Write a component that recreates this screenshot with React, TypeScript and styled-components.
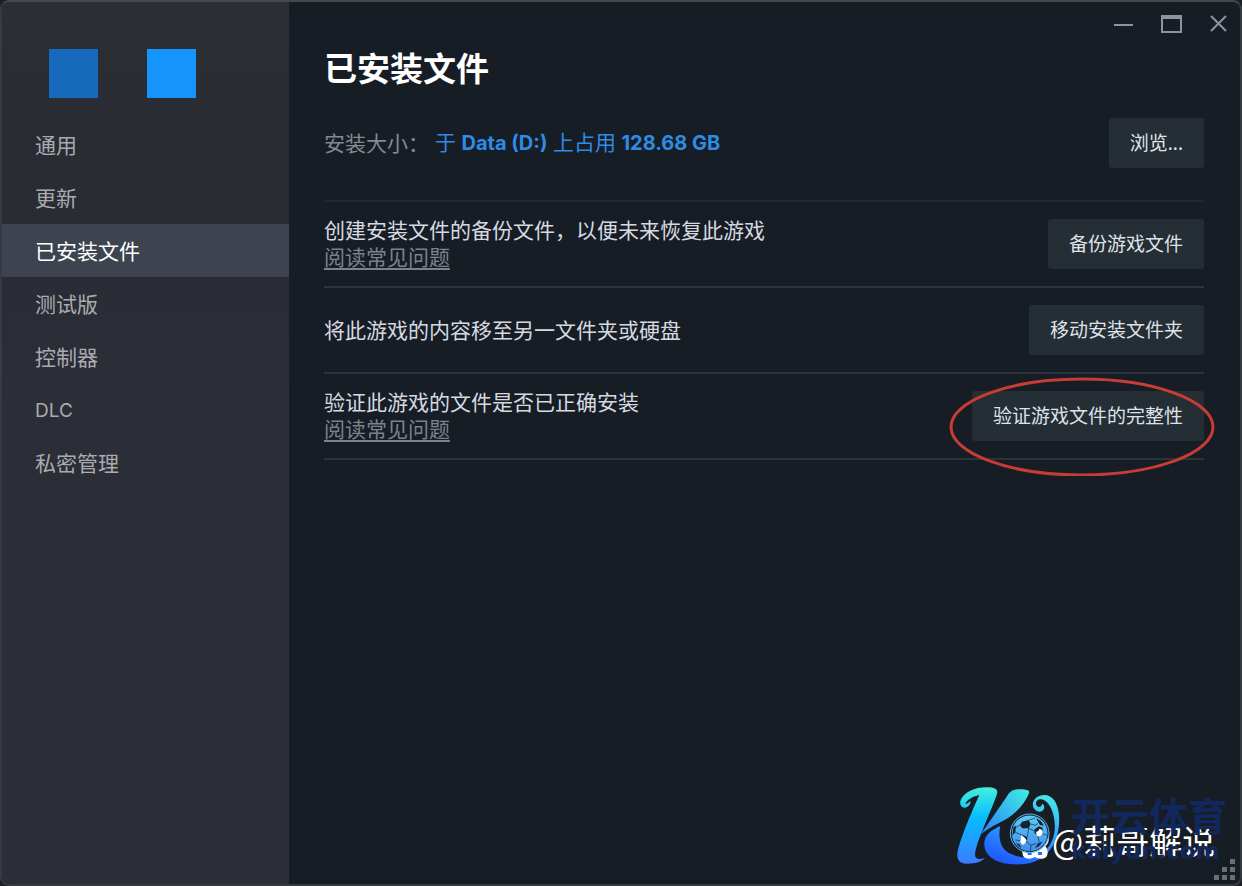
import React from 'react';
import styled, { createGlobalStyle } from 'styled-components';

const GlobalStyle = createGlobalStyle`
  * { box-sizing: border-box; }
  body {
    margin: 0;
    background: #1c1f26;
    font-family: 'Noto Sans', 'Noto Sans CJK SC', sans-serif;
    font-size: 21px;
    line-height: 27px;
    color: #d6dae0;
  }
`;

const Window = styled.div`
  position: relative;
  display: grid;
  grid-template-columns: 287px 1fr;
  min-height: 100vh;
  border: 2px solid #363b42;
  border-top-color: #46484c;
  border-radius: 9px;
  overflow: hidden;
  background: #171d25;
`;

const Sidebar = styled.aside`
  background: linear-gradient(180deg, #2b2e32 0, #2a2c34 140px, #2b2d37 400px, #2c2d38 100%);
`;

const Swatches = styled.div`
  display: flex;
  gap: 49px;
  padding: 47px 47px 20px;
`;

const Swatch = styled.span<{ $color: string }>`
  width: 49px;
  height: 49px;
  background: ${(p) => p.$color};
`;

const NavLink = styled.a<{ $active?: boolean }>`
  display: flex;
  align-items: center;
  height: 53px;
  padding: 2px 33px 0;
  text-decoration: none;
  color: ${(p) => (p.$active ? '#ffffff' : '#a9abae')};
  background: ${(p) => (p.$active ? '#3d4450' : 'transparent')};
`;

const Latin = styled.span`
  font-family: Inter, sans-serif;
  font-size: 19px;
`;

const Main = styled.main`
  padding: 46px 36px 0 35px;
`;

const Title = styled.h1`
  margin: 0;
  font-size: 33px;
  line-height: 42px;
  font-weight: 700;
  color: #ffffff;
`;

const SizeRow = styled.div`
  display: flex;
  align-items: center;
  margin-top: 28px;
  padding-bottom: 32px;
  border-bottom: 2px solid #212830;
`;

const SizeLabel = styled.span`
  color: #858a91;
`;

const SizeValue = styled.span`
  flex: 1;
  margin-left: 6px;
  color: #2e8ce4;
`;

const Strong = styled.strong`
  font-family: Inter, sans-serif;
  font-size: 20px;
  font-weight: 700;
`;

const Row = styled.section`
  display: flex;
  align-items: center;
  justify-content: space-between;
  min-height: 86px;
  border-bottom: 2px solid #2c333c;
`;

const RowText = styled.p`
  margin: 0;
`;

const FaqLink = styled.a`
  display: block;
  width: fit-content;
  color: #7c828a;
  text-decoration: underline;
  text-decoration-thickness: 2px;
  text-underline-offset: 3px;
`;

const Action = styled.button`
  height: 50px;
  padding: 0 21px;
  border: 0;
  border-radius: 3px;
  background: #252d35;
  color: #dfe3e8;
  font: inherit;
  font-size: 19px;
  cursor: pointer;
`;

const Marked = styled.div`
  position: relative;
`;

const Ring = styled.svg`
  position: absolute;
  left: -23px;
  top: -14px;
  width: 266px;
  height: 99px;
  pointer-events: none;
`;

const Controls = styled.div`
  position: absolute;
  top: 10px;
  right: 10px;
  display: flex;
  gap: 23px;
`;

const Control = styled.button`
  display: flex;
  width: 24px;
  height: 24px;
  padding: 0;
  border: 0;
  background: none;
  color: #8c949e;
  cursor: pointer;
`;

const Grip = styled.svg`
  position: absolute;
  right: 5px;
  bottom: 4px;
`;

const Watermark = styled.div`
  position: absolute;
  right: 12px;
  bottom: 14px;
  width: 272px;
  height: 84px;
`;

const Logo = styled.svg`
  position: absolute;
  left: 0;
  top: 0;
`;

const Author = styled.span`
  position: absolute;
  left: 96px;
  top: 34px;
  font-family: 'Noto Sans CJK SC', sans-serif;
  font-size: 33px;
  line-height: 40px;
  white-space: nowrap;
  color: #ffffff;
`;

const Brand = styled.div`
  position: absolute;
  left: 115px;
  top: 5px;
  color: #12285c;
  font-family: 'Noto Sans CJK SC', sans-serif;
  font-size: 39px;
  line-height: 46px;
  font-weight: 700;
  white-space: nowrap;
`;

const Site = styled.div`
  font-family: 'DejaVu Sans', sans-serif;
  font-size: 23px;
  line-height: 28px;
  font-weight: 700;
`;

const nav = ['通用', '更新', '已安装文件', '测试版', '控制器', 'DLC', '私密管理'];

const rows = [
  { text: '创建安装文件的备份文件，以便未来恢复此游戏', faq: true, action: '备份游戏文件' },
  { text: '将此游戏的内容移至另一文件夹或硬盘', faq: false, action: '移动安装文件夹' },
  { text: '验证此游戏的文件是否已正确安装', faq: true, action: '验证游戏文件的完整性', marked: true },
];

const BrandLogo = () => (
  <Logo width="104" height="80" viewBox="48 30 312 240" aria-hidden="true">
    <defs>
      <linearGradient id="stem" x1="0" y1="0" x2="0" y2="1">
        <stop offset="0" stopColor="#43f0dc" />
        <stop offset="0.4" stopColor="#08bcff" />
        <stop offset="1" stopColor="#3b7cff" />
      </linearGradient>
      <linearGradient id="arm" x1="1" y1="0" x2="0" y2="1">
        <stop offset="0" stopColor="#3ff0e0" />
        <stop offset="1" stopColor="#2a78ff" />
      </linearGradient>
      <linearGradient id="sweep" x1="0.8" y1="0" x2="0.4" y2="1">
        <stop offset="0" stopColor="#48e4ea" />
        <stop offset="0.55" stopColor="#2f9bff" />
        <stop offset="1" stopColor="#1f5cff" />
      </linearGradient>
      <linearGradient id="ball" x1="0" y1="0" x2="0" y2="1">
        <stop offset="0" stopColor="#5ccdf2" />
        <stop offset="1" stopColor="#3f8df5" />
      </linearGradient>
    </defs>
    <path fill="url(#stem)" d="M92 76C91 86 84 95 74 95C63 95 58 84 62 73C72 48 104 34 139 34C162 34 176 39 171 54C160 88 128 157 111 208C103 233 102 248 116 249Q125 250 134 246C125 259 101 264 78 263C54 262 48 244 54 221C67 174 99 98 118 57C97 62 79 73 76 83C82 86 87 77 92 76Z" />
    <path fill="url(#arm)" d="M119 178C142 147 179 93 202 59C211 45 221 40 237 40C257 39 271 42 267 52C254 84 229 112 194 132C162 148 138 162 119 178Z" />
    <path fill="url(#sweep)" d="M181 150C174 178 180 212 199 226C226 246 273 251 304 232C340 209 351 165 341 121C335 91 320 72 303 70C290 69 284 82 291 90C298 97 307 91 306 83C316 87 316 103 301 107C286 109 276 94 279 80C283 65 298 56 316 57C338 59 352 80 356 109C362 150 351 196 328 224C302 258 256 270 207 264C163 260 131 236 133 202C134 177 151 164 181 150Z" />
    <path fill="#fff" d="M251 212q-6 6-4 17c1 14 7 19 20 19q10 0 17-5 8 5 19 5c15 0 20-7 20-21q0-11-7-16c10-8 12-20 9-31h-16l-28 32z" />
    <path fill="#2b6fe6" d="M263 228h12v9h-12zM294 228h12v9h-12z" />
    <circle cx="269" cy="172" r="55" fill="url(#ball)" stroke="#172331" strokeWidth="3" />
    <circle cx="269" cy="172" r="58" fill="none" stroke="#4fbcf3" strokeWidth="3" />
    <path fill="#172331" d="M246 137l20-5 6 12-6 13-20 0-6-10zM288 127l14 7 10 15-12-2zM220 154l8-5-2 20-9 10zM284 160l13-9 11 5-2 16-13 5-10-6zM248 176l14 8-1 14-12 5-9-10zM294 202l13-5-10 14-12 5zM228 200l12 6 4 11-11-9z" />
    <path fill="none" stroke="#172331" strokeWidth="2" d="M272 144l14 4 8-6M266 132l20-6M266 157l-4 26M284 165l-18-8M240 147l-14 8M226 169l20 8M240 194l-14-2M261 198l12 10 16-6M293 177l4 21M306 172l14 6M273 208l-2 16" />
    <path fill="#fff" d="M244 178q12 5 16 15-4 13-12 13-8-4-7-14zM288 168q8-2 11-10 10 4 9 14-6 12-17 8z" />
  </Logo>
);

export default function App() {
  return (
    <>
      <GlobalStyle />
      <Window>
        <Sidebar>
          <Swatches>
            <Swatch $color="#1769bb" />
            <Swatch $color="#1595fc" />
          </Swatches>
          <nav>
            {nav.map((item) => (
              <NavLink key={item} href="#" $active={item === '已安装文件'}>
                {item === 'DLC' ? <Latin>{item}</Latin> : item}
              </NavLink>
            ))}
          </nav>
        </Sidebar>
        <Main>
          <Title>已安装文件</Title>
          <SizeRow>
            <SizeLabel>安装大小：</SizeLabel>
            <SizeValue>
              于 <Strong>Data (D:)</Strong> 上占用 <Strong>128.68 GB</Strong>
            </SizeValue>
            <Action>浏览...</Action>
          </SizeRow>
          {rows.map((row) => (
            <Row key={row.action}>
              <div>
                <RowText>{row.text}</RowText>
                {row.faq && <FaqLink href="#">阅读常见问题</FaqLink>}
              </div>
              <Marked>
                <Action>{row.action}</Action>
                {row.marked && (
                  <Ring viewBox="0 0 266 99" aria-hidden="true">
                    <ellipse cx="133" cy="50" rx="131" ry="48" fill="none" stroke="#c93b35" strokeWidth="3" />
                  </Ring>
                )}
              </Marked>
            </Row>
          ))}
        </Main>
        <Controls>
          <Control aria-label="最小化">
            <svg width="24" height="24"><path d="M2 13h19" stroke="currentColor" strokeWidth="2" /></svg>
          </Control>
          <Control aria-label="最大化">
            <svg width="24" height="24" fill="none" stroke="currentColor">
              <path d="M2 5h21" strokeWidth="4" />
              <path d="M3 4h19v16H3z" strokeWidth="2" />
            </svg>
          </Control>
          <Control aria-label="关闭">
            <svg width="24" height="24"><path d="M5 4l15 15M20 4L5 19" stroke="currentColor" strokeWidth="2" /></svg>
          </Control>
        </Controls>
        <Watermark>
          <Author>@莉哥解说</Author>
          <BrandLogo />
          <Brand>
            开云体育
            <Site>kaiyun.com</Site>
          </Brand>
        </Watermark>
        <Grip width="21" height="21" fill="#6a6f74" aria-hidden="true">
          <path d="M16 0h5v5h-5zM8 8h5v5H8zM16 8h5v5h-5zM0 16h5v5H0zM8 16h5v5H8zM16 16h5v5h-5z" />
        </Grip>
      </Window>
    </>
  );
}
